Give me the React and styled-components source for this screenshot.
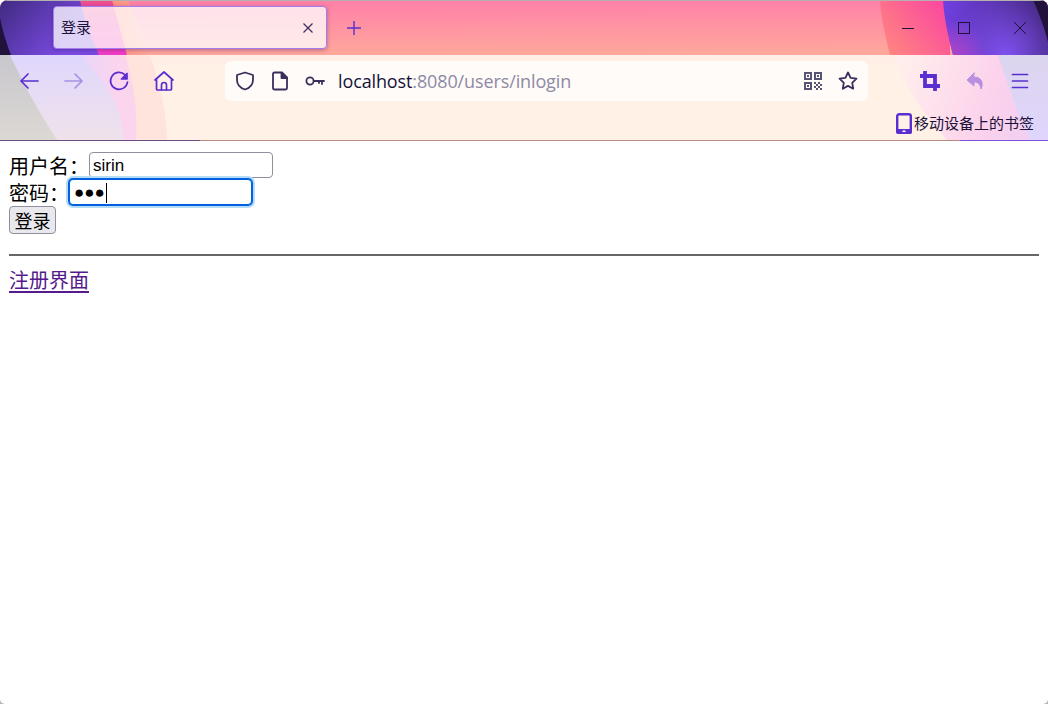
import React from "react";
import styled, { createGlobalStyle } from "styled-components";

const BODY_FONT = `"Noto Sans CJK SC", "Liberation Sans", sans-serif`;

const Global = createGlobalStyle`
  html, body { margin: 0; padding: 0; }
  body {
    width: 1048px; height: 704px; overflow: hidden; font-family: ${BODY_FONT};
    background: linear-gradient(#fff 0 690px, #b5b5b5 690px);
  }
`;

const Win = styled.div`
  width: 1048px; height: 704px; background: #fff; border-radius: 8px 8px 5px 5px; overflow: hidden;
  display: flex; flex-direction: column;
`;
const Chrome = styled.header`
  position: relative; height: 141px; flex: none; display: flex; flex-direction: column; overflow: hidden;
`;
const Art = styled.svg`
  position: absolute; inset: 0; width: 1048px; height: 141px;
`;
const TitleBar = styled.div`
  position: relative; height: 55px; flex: none; display: flex; align-items: flex-start; padding-left: 53px; box-sizing: border-box; padding-top: 6px;
`;
const Tab = styled.div`
  width: 274px; height: 43px; box-sizing: border-box; border: 1px solid #a57bf0; border-radius: 4px;
  background: rgba(255,255,255,.76); box-shadow: 0 1px 4px rgba(50,20,80,.4);
  display: flex; align-items: center; padding: 0 12px 0 7px; justify-content: space-between;
  font: 15px/20px "Noto Sans CJK SC", sans-serif; color: #20123a;
`;
const TabLabel = styled.span`
  position: relative; top: -1px;
`;
const NewTab = styled.div`
  margin-left: 19px; margin-top: 14px; width: 16px; height: 16px; display: flex; color: #5b2fd0;
`;
const WinControls = styled.div`
  margin-left: auto; display: flex; height: 44px; align-items: center; color: #20123a;
`;
const WinBtn = styled.div`
  width: 56px; height: 44px; display: flex; align-items: center; justify-content: center;
`;
const ToolBar = styled.div`
  position: relative; height: 50px; flex: none; display: flex; align-items: center; padding: 1px 0 0 18px; box-sizing: border-box;
`;
const NavGroup = styled.div`
  display: flex; align-items: center; gap: 23px; width: 207px;
`;
const NavIcon = styled.svg`
  width: 22px; height: 22px; flex: none; fill: none; stroke: #5a2fd0; stroke-width: 1.7; stroke-linecap: round; stroke-linejoin: round;
  opacity: ${p => p.$dim ? 0.42 : 1};
`;
const CropIcon = styled(NavIcon)`
  stroke-width: 3.8; stroke-linecap: butt; stroke-linejoin: miter;
`;
const UndoIcon = styled(NavIcon)`
  fill: #5a2fd0; stroke-width: 1;
`;
const UrlBar = styled.div`
  width: 643px; height: 40px; background: #fffbf8; border-radius: 6px; display: flex; align-items: center; padding: 0 10px; box-sizing: border-box; gap: 15px;
`;
const UrlIcon = styled.svg`
  width: 20px; height: 20px; flex: none; fill: none; stroke: #3b2d5c; stroke-width: 1.8; stroke-linecap: round; stroke-linejoin: round;
`;
const UrlText = styled.div`
  font: 18px "Open Sans", "Noto Sans", sans-serif; color: #8d8aa4; flex: 1; letter-spacing: -.12px; white-space: nowrap; margin-left: -2px;
  b { font-weight: 400; color: #15123a; }
`;
const RightTools = styled.div`
  display: flex; align-items: center; gap: 23px; margin-left: 51px;
`;
const BookmarkBar = styled.div`
  position: relative; flex: 1; display: flex; align-items: center; justify-content: flex-end; padding: 0 14px 0 0; gap: 2px;
  font: 15px/20px "Noto Sans CJK SC", sans-serif; color: #20123a;
`;
const Page = styled.main`
  padding: 11px 9px 0 9px; font-size: 20px; line-height: 27px; color: #000; font-family: ${BODY_FONT};
`;
const Line = styled.div`
  height: 27px; display: flex; align-items: flex-start; font-size: 20px; line-height: 27px;
`;
const TextInput = styled.div`
  position: relative; height: 26px; box-sizing: border-box; display: flex; align-items: center; background: #fff;
  font: 17px/24px "Liberation Sans", sans-serif; padding: 1px 0 0 3px;
  width: ${p => p.$w}px;
  border: 1px solid ${p => p.$focus ? "#0060df" : "#8f8f9d"}; border-radius: 4px;
  ${p => p.$focus ? "box-shadow: 0 0 0 1px #0060df, 0 0 0 3px #b5dcf7; padding-left: 4px;" : ""}
`;
const Caret = styled.span`
  display: inline-block; width: 1px; height: 20px; background: #000; margin-left: 1px;
`;
const Submit = styled.button`
  width: 47px; height: 28px; box-sizing: border-box; background: #e9e9ed; border: 1px solid #8f8f9d; border-radius: 4px;
  font-size: 18px; font-family: ${BODY_FONT}; padding: 0; color: #000; display: block; line-height: 1;
`;
const Rule = styled.hr`
  margin: 20px 0 10px; height: 2px; border: 0; background: #666;
`;
const LinkA = styled.a`
  color: #551a8b; text-decoration: underline; text-underline-offset: 3px; font-size: 20px; line-height: 27px;
`;

const PURPLE_R = "M943 0H1048V55H953C948 35 944 18 943 0Z";

export default function App() {
  return (
    <Win>
      <Global />
      <Chrome>
        <Art viewBox="0 0 1048 141" preserveAspectRatio="none">
          <defs>
            <linearGradient id="tb" x1="0" y1="0" x2="0.05" y2="1">
              <stop offset="0" stopColor="#ff7fa9" />
              <stop offset="1" stopColor="#ffa79c" />
            </linearGradient>
            <linearGradient id="purL" gradientUnits="userSpaceOnUse" x1="0" y1="0" x2="60" y2="55">
              <stop offset="0" stopColor="#3f2a80" />
              <stop offset="1" stopColor="#7a4ae2" />
            </linearGradient>
            <linearGradient id="mag" x1="0" y1="0" x2="0" y2="1">
              <stop offset="0" stopColor="#ee4f90" />
              <stop offset="1" stopColor="#f23cc8" />
            </linearGradient>
            <linearGradient id="ora" x1="0" y1="0" x2="1" y2="0">
              <stop offset="0" stopColor="#ff8070" />
              <stop offset="1" stopColor="#ffa79c" />
            </linearGradient>
            <linearGradient id="hot" gradientUnits="userSpaceOnUse" x1="945" y1="10" x2="890" y2="55">
              <stop offset="0" stopColor="#fb4a9e" />
              <stop offset="1" stopColor="#ff8580" />
            </linearGradient>
            <linearGradient id="purR" gradientUnits="userSpaceOnUse" x1="945" y1="0" x2="1040" y2="10">
              <stop offset="0" stopColor="#7040e0" />
              <stop offset="1" stopColor="#452880" />
            </linearGradient>
            <radialGradient id="purGlow" gradientUnits="userSpaceOnUse" cx="1005" cy="55" r="60">
              <stop offset="0" stopColor="#7e50ee" />
              <stop offset="1" stopColor="#7e50ee" stopOpacity="0" />
            </radialGradient>
            <radialGradient id="magGlow" gradientUnits="userSpaceOnUse" cx="950" cy="58" r="38">
              <stop offset="0" stopColor="#b845c8" />
              <stop offset="1" stopColor="#b845c8" stopOpacity="0" />
            </radialGradient>
            <linearGradient id="grey" x1="0" y1="0" x2="0" y2="1">
              <stop offset="0" stopColor="#c8c7cc" />
              <stop offset="1" stopColor="#dcd8d4" />
            </linearGradient>
            <linearGradient id="lav" gradientUnits="userSpaceOnUse" x1="60" y1="0" x2="118" y2="0">
              <stop offset="0" stopColor="#e0d7fd" />
              <stop offset="1" stopColor="#fbd4ee" />
            </linearGradient>
            <linearGradient id="lav2" x1="0" y1="0" x2="0" y2="1">
              <stop offset="0" stopColor="#dfd7fd" />
              <stop offset="1" stopColor="#f0e2ea" />
            </linearGradient>
            <linearGradient id="rightT" gradientUnits="userSpaceOnUse" x1="900" y1="70" x2="1020" y2="110">
              <stop offset="0" stopColor="#ffeeec" />
              <stop offset="0.75" stopColor="#fcd2ec" />
              <stop offset="1" stopColor="#f4d0f0" />
            </linearGradient>
            <linearGradient id="rightL" x1="0" y1="0" x2="0" y2="1">
              <stop offset="0" stopColor="#dcd5ee" />
              <stop offset="1" stopColor="#e0d5fd" />
            </linearGradient>
          </defs>
          <rect width="1048" height="141" fill="#fff1e6" />
          <rect y="55" width="1048" height="10" fill="#ffeee6" />
          <rect width="1048" height="55" fill="url(#tb)" />

          <path d="M88 0H128C136 20 143 40 150 55H100Z" fill="url(#ora)" />
          <path d="M80 0H112C118 20 122 38 127 55H96Z" fill="url(#mag)" />
          <path d="M0 0H80C85 20 92 40 99 55H0Z" fill="url(#purL)" />
          <path d="M0 18C3 32 7 45 11 55H0Z" fill="#20123a" />

          <path d="M880 0H950V55H890C885 35 881 18 880 0Z" fill="url(#hot)" />
          <path d={PURPLE_R} fill="url(#purR)" />
          <path d={PURPLE_R} fill="url(#purGlow)" />
          <path d={PURPLE_R} fill="url(#magGlow)" />
          <path d="M1033 0C1040 15 1045 30 1048 42V0Z" fill="#20123a" />
          <rect width="1048" height="1" fill="#b5b0b0" />

          <path d="M0 55H150C160 85 167 115 167 141H0Z" fill="#ffe3dd" />
          <path d="M0 55H125C133 80 138 110 136 141H0Z" fill="url(#lav)" />
          <path d="M0 55H80C100 78 122 100 124 141H0Z" fill="url(#lav2)" />
          <path d="M0 55H10C22 80 38 112 58 141H0Z" fill="url(#grey)" />

          <path d="M895 55C905 90 925 115 948 141H1048V55Z" fill="url(#rightT)" />
          <path d="M998 55C1008 85 1018 115 1031 141H1048V55Z" fill="url(#rightL)" />

          <rect y="140" width="1048" height="1" fill="#b98a80" />
          <rect y="140" width="200" height="1" fill="#6b4d80" />
          <rect x="960" y="140" width="88" height="1" fill="#7a4fe0" />
        </Art>
        <TitleBar>
          <Tab>
            <TabLabel>登录</TabLabel>
            <svg width="12" height="12" viewBox="0 0 12 12" stroke="#3b2d5c" strokeWidth="1.2" fill="none"><path d="M1.5 1.5l9 9M10.5 1.5l-9 9" /></svg>
          </Tab>
          <NewTab>
            <svg width="16" height="16" viewBox="0 0 16 16" stroke="currentColor" strokeWidth="1.4" fill="none"><path d="M8 1v14M1 8h14" /></svg>
          </NewTab>
          <WinControls>
            <WinBtn><svg width="14" height="14" viewBox="0 0 14 14" stroke="currentColor" fill="none"><path d="M1 7.500h12" /></svg></WinBtn>
            <WinBtn><svg width="14" height="14" viewBox="0 0 14 14" stroke="currentColor" fill="none"><rect x="1.500" y="1.500" width="11" height="11" /></svg></WinBtn>
            <WinBtn><svg width="14" height="14" viewBox="0 0 14 14" stroke="currentColor" fill="none"><path d="M1 1l12 12M13 1L1 13" /></svg></WinBtn>
          </WinControls>
        </TitleBar>
        <ToolBar>
          <NavGroup>
            <NavIcon viewBox="0 0 22 22"><path d="M20 11H3M10 4l-7 7 7 7" /></NavIcon>
            <NavIcon $dim viewBox="0 0 22 22"><path d="M2 11h17M12 4l7 7-7 7" /></NavIcon>
            <NavIcon viewBox="0 0 22 22"><path d="M19.500 12a8.500 8.500 0 1 1-2.500-7.200" /><path d="M19 3.500V9h-5.500z" fill="#5a2fd0" /></NavIcon>
            <NavIcon viewBox="0 0 22 22"><path d="M2 10L11 2l9 8M3.500 9V19a1 1 0 0 0 1 1h13a1 1 0 0 0 1-1V9" /><path d="M8.500 20v-5a2.500 2.500 0 0 1 5 0v5" /></NavIcon>
          </NavGroup>
          <UrlBar>
            <UrlIcon viewBox="0 0 20 20"><path d="M10 1.500l8 2.500v5c0 5-3.500 8-8 9.500C5.500 17 2 14 2 9V4z" /></UrlIcon>
            <UrlIcon viewBox="0 0 20 20"><path d="M3 3a1.500 1.500 0 0 1 1.500-1.500H12L17 6.500V17a1.500 1.500 0 0 1-1.500 1.500h-11A1.500 1.500 0 0 1 3 17z" /><path d="M11.500 2v5h5.500" fill="#3b2d5c" /></UrlIcon>
            <UrlIcon viewBox="0 0 20 20"><circle cx="5" cy="10" r="3.600" /><path d="M8.800 10H19M17 10v3M14 10v2" /></UrlIcon>
            <UrlText><b>localhost</b>:8080/users/inlogin</UrlText>
            <svg width="20" height="20" viewBox="0 0 20 20" fill="#5a5474">
              <path fillRule="evenodd" d="M1 1h8v8H1zM3 3v4h4V3zM11 1h8v8h-8zM13 3v4h4V3zM1 11h8v8H1zM3 13v4h4v-4z" />
              <path d="M4 4h2v2H4zM14 4h2v2h-2zM4 14h2v2H4zM11 11h2v2h-2zM15 11h2v2h-2zM13 13h2v2h-2zM17 13h2v2h-2zM11 15h2v2h-2zM15 15h2v2h-2zM13 17h2v2h-2zM17 17h2v2h-2z" />
            </svg>
            <UrlIcon viewBox="0 0 20 20"><path d="M10 1.500l2.600 5.400 5.900.8-4.300 4.100 1 5.900L10 14.900l-5.200 2.800 1-5.900L1.500 7.700l5.900-.8z" /></UrlIcon>
          </UrlBar>
          <RightTools>
            <CropIcon viewBox="0 0 22 22"><path d="M6 1v15h15M1 6h15v15" /></CropIcon>
            <UndoIcon $dim viewBox="0 0 22 22"><path d="M10 3L3 10l7 6v-4c4 0 6 2 7 7 3-7 0-12-7-12z" /></UndoIcon>
            <NavIcon viewBox="0 0 22 22"><path d="M3.500 4.500h15M3.500 11h15M3.500 17.500h15" /></NavIcon>
          </RightTools>
        </ToolBar>
        <BookmarkBar>
          <svg width="16" height="21" viewBox="0 0 16 21"><rect x="1.200" y="1.200" width="13.600" height="18.600" rx="2" fill="none" stroke="#5a2fd0" strokeWidth="2.400" /><rect x="0" y="16" width="16" height="5" rx="2" fill="#5a2fd0" /><rect x="6.500" y="17.500" width="3" height="1.500" fill="#fff" /></svg>
          <span>移动设备上的书签</span>
        </BookmarkBar>
      </Chrome>
      <Page>
        <Line>用户名：<TextInput $w={184}>sirin</TextInput></Line>
        <Line>密码：<TextInput $focus $w={183}>●●●<Caret /></TextInput></Line>
        <Submit>登录</Submit>
        <Rule />
        <LinkA href="#">注册界面</LinkA>
      </Page>
    </Win>
  );
}
